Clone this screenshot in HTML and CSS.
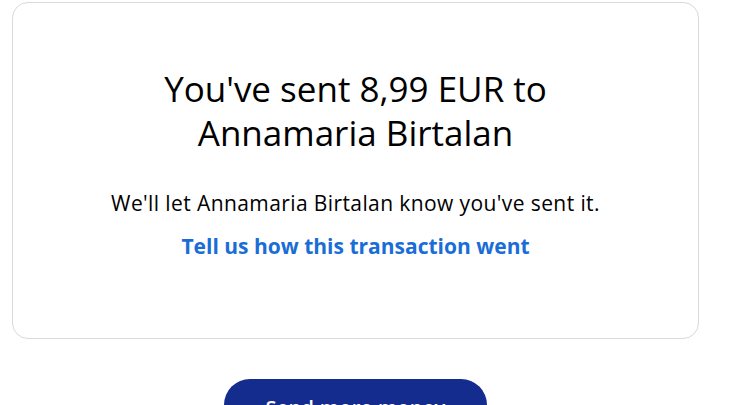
FILE: index.html
```html
<!DOCTYPE html>
<html>
<head>
<meta charset="utf-8">
<link rel="stylesheet" href="styles.css">
</head>
<body>
<div class="page">
  <div class="card">
    <h1 class="title">You've sent 8,99 EUR to<br>Annamaria Birtalan</h1>
    <p class="desc">We'll let Annamaria Birtalan know you've sent it.</p>
    <a class="link" href="#">Tell us how this transaction went</a>
  </div>
  <div class="actions">
    <button class="btn">Send more money</button>
  </div>
</div>
</body>
</html>
```
FILE: styles.css
```css
html, body {
  margin: 0;
  padding: 0;
  background: #fff;
  overflow: hidden;
}
body {
  font-family: "Open Sans", Lato, sans-serif;
  color: #000;
}
.page {
  padding: 2px 0 0 12px;
  width: 687px;
}
.card {
  border: 1px solid #d9d9d9;
  border-radius: 16px;
  height: 337px;
  box-sizing: border-box;
  display: flex;
  flex-direction: column;
  align-items: center;
  padding-top: 64px;
}
.title {
  margin: 0;
  font-size: 35px;
  font-weight: 400;
  line-height: 44px;
  text-align: center;
}
.desc {
  margin: 34px 0 0;
  font-size: 21px;
  letter-spacing: 0.4px;
  line-height: 28px;
}
.link {
  margin-top: 15px;
  font-size: 21px;
  font-weight: 700;
  line-height: 28px;
  color: #1a6dd6;
  text-decoration: none;
}
.actions {
  display: flex;
  justify-content: center;
  padding-top: 40px;
}
.btn {
  width: 263px;
  height: 52px;
  border: none;
  border-radius: 26px;
  background: #142c8e;
  color: #fff;
  font-family: "Open Sans", sans-serif;
  font-size: 20px;
  font-weight: 600;
  letter-spacing: 0.3px;
  padding: 5px 0 0;
}
```
